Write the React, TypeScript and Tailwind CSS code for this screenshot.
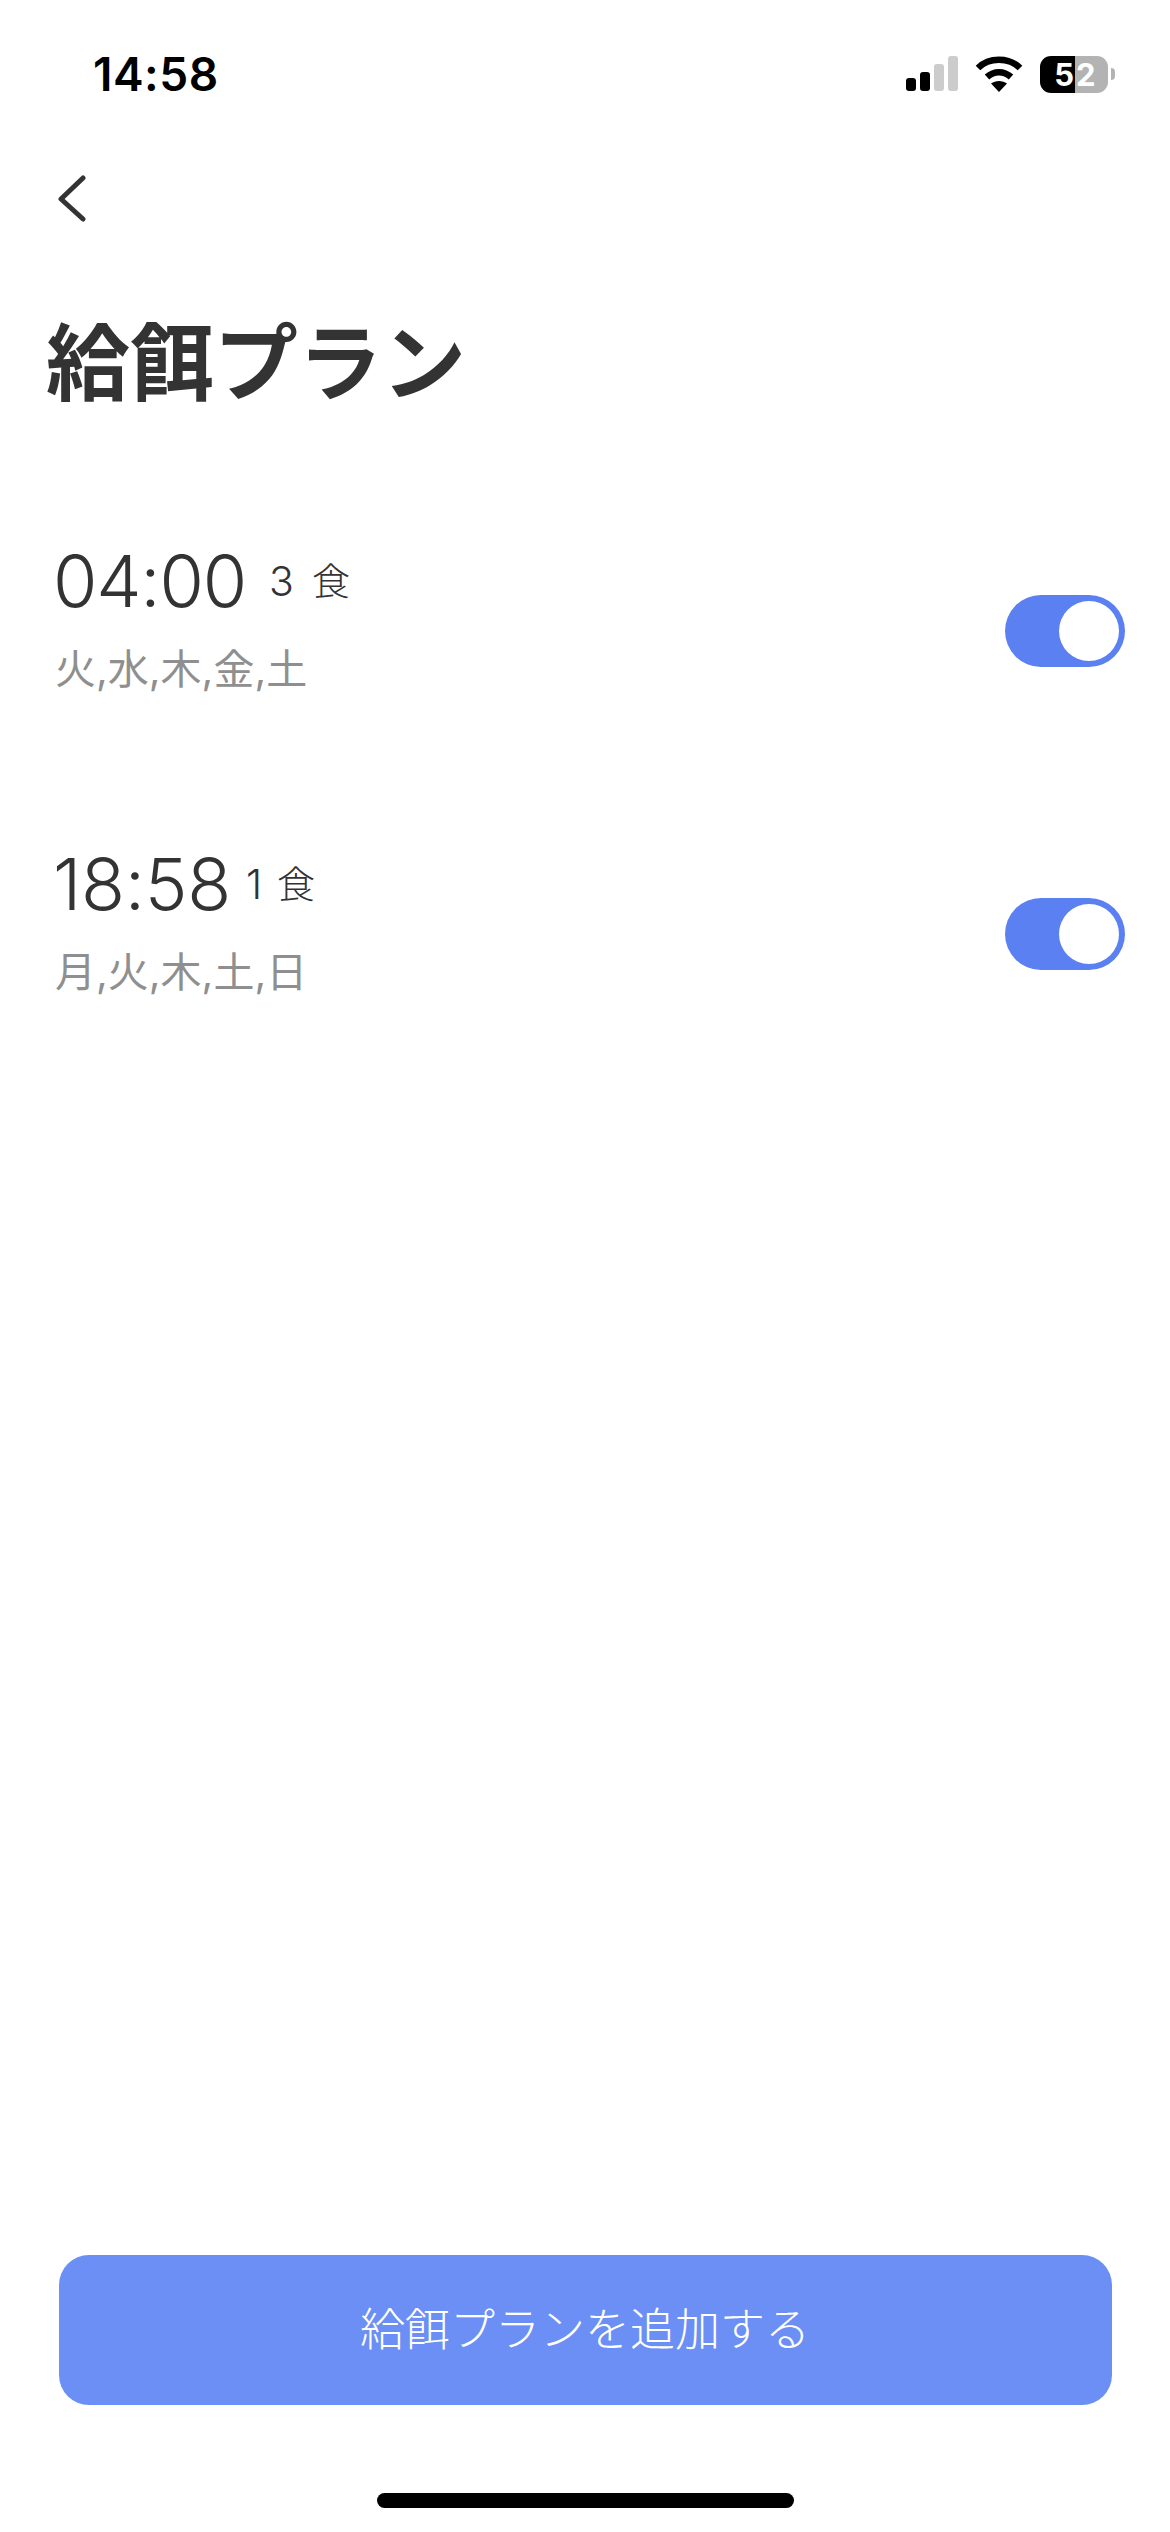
const FONT = 'font-["Inter","Noto_Sans_CJK_JP",sans-serif]'

const plans = [
  { time: '04:00', tracking: 'tracking-[-1.2px]', meals: '3', mealRowGap: 'gap-[23px]', innerGap: 'gap-[18px]', days: '火,水,木,金,土' },
  { time: '18:58', tracking: 'tracking-[-0.3px]', meals: '1', mealRowGap: 'gap-[15px]', innerGap: 'gap-[15px]', days: '月,火,木,土,日' },
]

function StatusBar() {
  return (
    <div className="flex h-[60px] items-center justify-between pl-[93px] pr-[55px] mt-[44px]">
      <span className="text-[46px] font-semibold leading-none tracking-[0.5px] text-black">14:58</span>
      <div className="flex items-center">
        {/* signal */}
        <svg width="52" height="36" viewBox="0 0 52 36" className="mr-[16px]">
          <rect x="0" y="22" width="10" height="13" rx="3" fill="#000" />
          <rect x="14" y="16" width="10" height="19" rx="3" fill="#000" />
          <rect x="28" y="8" width="10" height="27" rx="3" fill="#ccc" />
          <rect x="42" y="0" width="10" height="35" rx="3" fill="#ccc" />
        </svg>
        {/* wifi */}
        <svg width="50" height="38" viewBox="0 0 50 38" className="mr-[16px]">
          <path d="M4 13 C15 2 35 2 46 13" fill="none" stroke="#000" strokeWidth="6.5" strokeLinecap="butt" />
          <path d="M13 22 C20 15.5 30 15.5 37 22" fill="none" stroke="#000" strokeWidth="6.5" />
          <path d="M25 37 L17 28.5 C21.5 25 28.5 25 33 28.5 Z" fill="#000" />
        </svg>
        {/* battery */}
        <div className="flex h-[37px] w-[68px] overflow-hidden rounded-[11px] text-[31px] font-bold leading-none text-white">
          <div className="flex w-[35px] items-center justify-end bg-black pr-[1px]">5</div>
          <div className="flex w-[33px] items-center bg-[#b3b3b3] pl-[1px]">2</div>
        </div>
        <div className="ml-[3px] h-[12px] w-[4px] rounded-r-[4px] bg-[#b3b3b3]" />
      </div>
    </div>
  )
}

function Toggle() {
  return (
    <div className="flex h-[72px] w-[120px] items-center justify-end rounded-full bg-[#5a80f1] pr-[6px]">
      <div className="h-[60px] w-[60px] rounded-full bg-white" />
    </div>
  )
}

export default function App() {
  return (
    <div className={`${FONT} relative flex h-[2532px] w-[1170px] flex-col overflow-hidden bg-white`}>
      <StatusBar />

      <button type="button" className="ml-[56px] mt-[71px] h-[47px] w-[32px]">
        <svg width="32" height="47" viewBox="0 0 32 47">
          <path d="M27 3 L5 24 L27 44" fill="none" stroke="#333" strokeWidth="5" strokeLinecap="round" strokeLinejoin="round" />
        </svg>
      </button>

      <h1 className="ml-[46px] mt-[92px] text-[84px] font-bold leading-[100px] text-[#333]">給餌プラン</h1>

      <div className="mt-[137px] flex flex-col gap-[143px] pl-[53px] pr-[45px]">
        {plans.map((plan) => (
          <div key={plan.time} className="flex h-[160px] items-center justify-between">
            <div className="mb-[27px] flex flex-col">
              <div className={`flex items-center ${plan.mealRowGap} font-light text-[#333]`}>
                <span className={`text-[72px] leading-[90px] ${plan.tracking}`}>{plan.time}</span>
                <span className={`flex items-center ${plan.innerGap} leading-[40px]`}>
                  <span className="text-[41px]">{plan.meals}</span>
                  <span className="text-[38px]">食</span>
                </span>
              </div>
              <div className="ml-[2px] mt-[13px] text-[41px] leading-[60px] text-[#8f8f8f]">{plan.days}</div>
            </div>
            <Toggle />
          </div>
        ))}
      </div>

      <div className="mt-auto flex flex-col items-center">
        <button
          type="button"
          className="h-[150px] w-[1053px] rounded-[30px] bg-[#6c8ff5] text-[45px] font-light text-white"
        >
          給餌プランを追加する
        </button>
        <div className="mb-[24px] mt-[88px] h-[15px] w-[417px] rounded-full bg-black" />
      </div>
    </div>
  )
}
